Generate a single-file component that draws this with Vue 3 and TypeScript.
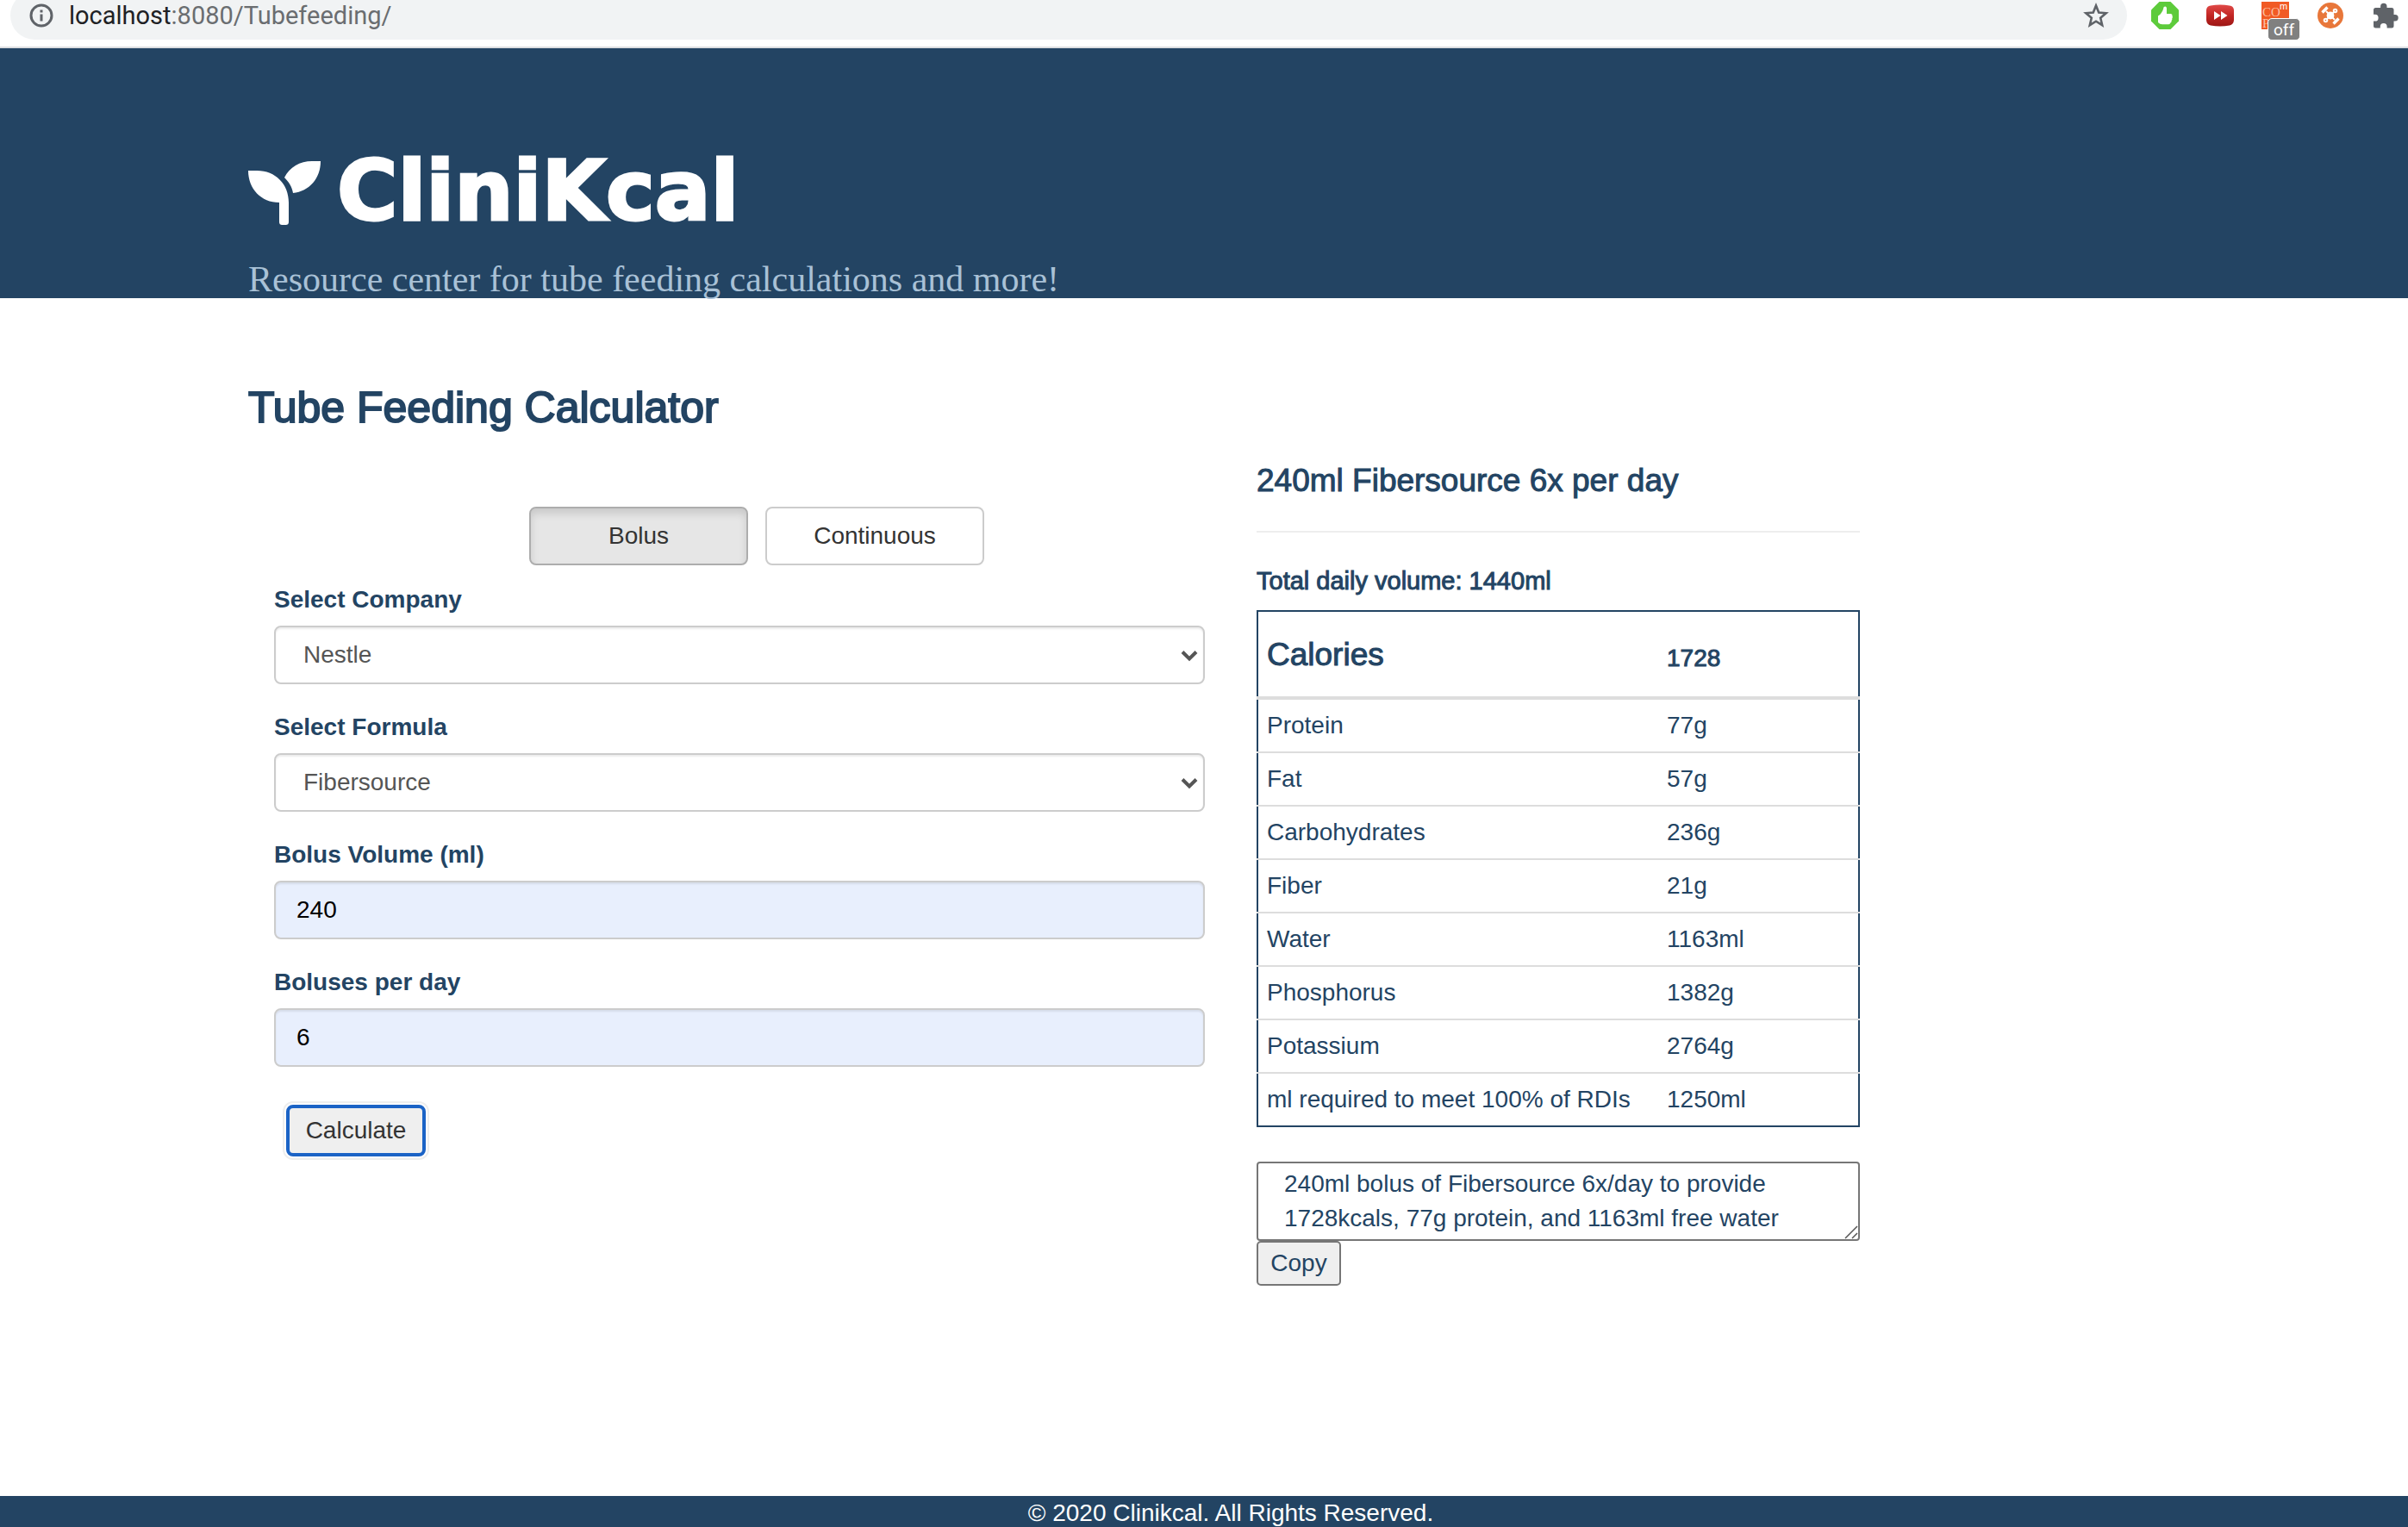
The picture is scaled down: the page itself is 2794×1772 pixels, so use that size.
<script setup lang="ts">
import { computed, ref } from 'vue'

type Mode = 'Bolus' | 'Continuous'

interface Nutrient {
  label: string
  value: string
}

const modes: Mode[] = ['Bolus', 'Continuous']
const mode = ref<Mode>('Bolus')
const company = ref('Nestle')
const formula = ref('Fibersource')
const volume = ref('240')
const boluses = ref('6')

const total = computed(() => Number(volume.value) * Number(boluses.value))

const nutrients: Nutrient[] = [
  { label: 'Protein', value: '77g' },
  { label: 'Fat', value: '57g' },
  { label: 'Carbohydrates', value: '236g' },
  { label: 'Fiber', value: '21g' },
  { label: 'Water', value: '1163ml' },
  { label: 'Phosphorus', value: '1382g' },
  { label: 'Potassium', value: '2764g' },
  { label: 'ml required to meet 100% of RDIs', value: '1250ml' },
]

const summary = ref(
  '240ml bolus of Fibersource 6x/day to provide 1728kcals, 77g protein, and 1163ml free water',
)
</script>

<template>
  <div class="page">
    <div class="browser">
      <div class="address">
        <svg class="info" viewBox="0 0 28 28" aria-hidden="true">
          <circle cx="14" cy="14" r="12" fill="none" stroke="#5f6368" stroke-width="3" />
          <path d="M12.500 7.500h3v3h-3zM12.500 12.500h3v8h-3z" fill="#5f6368" />
        </svg>
        <span class="url"><span class="host">localhost</span>:8080/Tubefeeding/</span>
        <button class="tool" type="button" aria-label="Bookmark this page">
          <svg viewBox="0 0 32 32">
            <path d="M16 4.500l3.200 8 8.500.700-6.500 5.600 2 8.400L16 22.700l-7.200 4.500 2-8.400-6.500-5.600 8.500-.700z" fill="none" stroke="#5f6368" stroke-width="2.600" />
          </svg>
        </button>
      </div>
      <div class="extensions">
        <button class="tool" type="button" aria-label="Thumbs up">
          <svg viewBox="0 0 32 32">
            <path d="M9.500 0h13L32 9.500v13L22.500 32h-13L0 22.500v-13z" fill="#5dcb3b" />
            <path d="M8 16.500q3-1.500 5.500-6.500l1.200-4q2.800-1.600 3.300 1.500V14h5q2 .500 1.500 2.500 1 1.500-.200 2.800.500 1.700-.700 2.600.300 2-1.300 2.600-.300 1.700-2 1.700H13q-3 0-5-2.200z" fill="#fff" />
          </svg>
        </button>
        <button class="tool" type="button" aria-label="Fast forward">
          <svg viewBox="0 0 32 32">
            <defs>
              <linearGradient id="red" x1="0" y1="0" x2="0" y2="1">
                <stop offset="0" stop-color="#e04a48" />
                <stop offset="0.500" stop-color="#c22624" />
                <stop offset="1" stop-color="#9c1614" />
              </linearGradient>
            </defs>
            <path d="M5 4.500q11-2 22 0 4.500.500 5 5v12q-.500 5-5 6-11 2-22 0-4.500-1-5-6v-12q.500-4.500 5-5z" fill="url(#red)" />
            <path d="M9 11l7.500 5L9 21zM17 11l7.500 5-7.500 5z" fill="#fff" />
          </svg>
        </button>
        <button class="tool" type="button" aria-label="Compare, off">
          <svg viewBox="0 0 32 32">
            <path d="M0 0h32v32H0z" fill="#f15a24" />
            <text x="1" y="17" font-size="15" fill="#fbc0a4">CO</text>
            <text x="1" y="30" font-size="15" fill="#fbc0a4">P</text>
            <text class="sup" x="21" y="9" font-size="11" fill="#fff">m</text>
          </svg>
          <span class="badge">off</span>
        </button>
        <button class="tool" type="button" aria-label="Drone">
          <svg viewBox="0 0 32 32">
            <circle cx="16" cy="16" r="15" fill="#e8773a" />
            <g fill="none" stroke="#fff" stroke-width="2">
              <path d="M11 11l10 10M21 11l-10 10" />
              <path d="M6.500 12.500l6-6M19.500 25.500l6-6" stroke-width="3.400" />
              <circle cx="21.500" cy="10.500" r="1.800" />
              <circle cx="10.500" cy="21.500" r="1.800" />
            </g>
            <circle cx="16" cy="16" r="4.400" fill="#fff" />
          </svg>
        </button>
        <button class="tool" type="button" aria-label="Extensions">
          <svg viewBox="0 0 32 32">
            <path d="M27 15h-1.500V9.500a2.500 2.500 0 0 0-2.500-2.500h-5.500V5.500a3.700 3.700 0 0 0-7.400 0V7H4.500A2.500 2.500 0 0 0 2 9.500v5.300h1.700a3.900 3.900 0 0 1 0 7.800H2v5.300a2.500 2.500 0 0 0 2.500 2.500h5.300v-1.600a3.900 3.900 0 0 1 7.800 0v1.600H23a2.500 2.500 0 0 0 2.500-2.500v-5.500H27a3.700 3.700 0 0 0 0-7.400z" fill="#5f6368" />
          </svg>
        </button>
      </div>
    </div>

    <header class="header">
      <a class="logo" href="/">
        <svg class="sprout" viewBox="0 0 84 76" aria-hidden="true">
          <g fill="#fff">
            <path d="M0 12h10c22 0 37 16 37 37v22c0 3-1 4-4 4h-3c-3 0-4-1-4-4V49C15 49 0 33 0 12z" />
            <path d="M84 1c0 20-13 35-32 37-1-7-5-13-10-18C48 8 60 1 74 1z" />
          </g>
        </svg>
        <span>CliniKcal</span>
      </a>
      <p class="tagline">Resource center for tube feeding calculations and more!</p>
    </header>

    <main class="main">
      <h1 class="title">Tube Feeding Calculator</h1>
      <div class="row">
        <form class="form" @submit.prevent>
          <div class="modes">
            <button
              v-for="m in modes"
              :key="m"
              type="button"
              class="mode"
              :class="{ active: m === mode }"
              @click="mode = m"
            >{{ m }}</button>
          </div>
          <div class="group">
            <label for="company">Select Company</label>
            <div class="select">
              <select id="company" v-model="company" class="control">
                <option>Nestle</option>
              </select>
              <svg class="chevron" viewBox="0 0 20 14" aria-hidden="true">
                <path d="M2 2.500l8 8 8-8" fill="none" stroke="#555" stroke-width="4" />
              </svg>
            </div>
          </div>
          <div class="group">
            <label for="formula">Select Formula</label>
            <div class="select">
              <select id="formula" v-model="formula" class="control">
                <option>Fibersource</option>
              </select>
              <svg class="chevron" viewBox="0 0 20 14" aria-hidden="true">
                <path d="M2 2.500l8 8 8-8" fill="none" stroke="#555" stroke-width="4" />
              </svg>
            </div>
          </div>
          <div class="group">
            <label for="volume">Bolus Volume (ml)</label>
            <input id="volume" v-model="volume" class="control filled" type="text" />
          </div>
          <div class="group">
            <label for="boluses">Boluses per day</label>
            <input id="boluses" v-model="boluses" class="control filled" type="text" />
          </div>
          <button class="calculate" type="submit">Calculate</button>
        </form>

        <section class="results">
          <h2 class="heading">{{ volume }}ml {{ formula }} {{ boluses }}x per day</h2>
          <hr />
          <h3 class="total">Total daily volume: {{ total }}ml</h3>
          <table>
            <thead>
              <tr>
                <th class="name">Calories</th>
                <th class="amount">1728</th>
              </tr>
            </thead>
            <tbody>
              <tr v-for="n in nutrients" :key="n.label">
                <td>{{ n.label }}</td>
                <td>{{ n.value }}</td>
              </tr>
            </tbody>
          </table>
          <div class="summary">
            <textarea v-model="summary" rows="2" aria-label="Summary"></textarea>
            <svg class="grip" viewBox="0 0 16 16" aria-hidden="true">
              <path d="M1 15L15 1M9 15l6-6" stroke="#555" stroke-width="1.500" />
            </svg>
          </div>
          <button class="copy" type="button">Copy</button>
        </section>
      </div>
    </main>

    <footer class="footer">© 2020 Clinikcal. All Rights Reserved.</footer>
  </div>
</template>

<style>
body {
  margin: 0;
  background: #fff;
}
</style>

<style scoped>
* {
  box-sizing: border-box;
}

.page {
  display: flex;
  flex-direction: column;
  min-height: 100vh;
  color: #234463;
  font-family: "Liberation Sans", Arial, sans-serif;
  font-size: 28px;
  line-height: 40px;
}

button,
input,
select,
textarea {
  margin: 0;
  font: inherit;
}

/* Browser bar */
.browser {
  display: flex;
  height: 56px;
  overflow: hidden;
  border-bottom: 2px solid #dcdee1;
  background: #fff;
}

.address {
  display: flex;
  flex: 1;
  align-items: center;
  height: 56px;
  margin: -10px 0 0 12px;
  padding: 0 20px 0 22px;
  border-radius: 28px;
  background: #f1f3f4;
}

.info {
  width: 28px;
  height: 28px;
}

.url {
  flex: 1;
  margin-left: 18px;
  color: #6a6d70;
  font-family: Roboto, sans-serif;
  font-size: 29px;
}

.host {
  color: #202124;
}

.extensions {
  display: flex;
  gap: 32px;
  padding: 2px 10px 0 28px;
}

.tool {
  position: relative;
  width: 32px;
  height: 32px;
  padding: 0;
  border: 0;
  background: none;
}

.tool svg {
  display: block;
  width: 32px;
  height: 32px;
  overflow: visible;
  font-family: "Liberation Serif", serif;
}

.tool .sup {
  font-family: "Liberation Sans", sans-serif;
}

.badge {
  position: absolute;
  top: 19px;
  left: 7px;
  width: 38px;
  height: 26px;
  border: 1px solid #fff;
  border-radius: 5px;
  background: #808080;
  color: #fff;
  font-family: Roboto, sans-serif;
  font-size: 19px;
  line-height: 26px;
  text-align: center;
}

/* Header */
.header {
  padding: 114px 226px 0 288px;
  background: #234463;
}

.logo {
  display: flex;
  align-items: flex-end;
  gap: 19px;
  height: 104px;
  color: #fff;
  font-family: "DejaVu Sans", sans-serif;
  font-size: 96px;
  font-weight: 700;
  line-height: 104px;
  text-decoration: none;
  -webkit-text-stroke: 3px #fff;
}

.sprout {
  width: 84px;
  height: 76px;
  margin-bottom: 12px;
}

.tagline {
  margin: 28px 0 0;
  color: #a9c1d6;
  font-family: "Liberation Serif", serif;
  font-size: 42px;
  line-height: 44px;
}

/* Calculator */
.main {
  padding: 100px 226px 60px 288px;
}

.title,
.heading,
.total,
th {
  font-weight: 400;
  -webkit-text-stroke: 1px currentColor;
}

.title {
  margin: 0;
  font-size: 50px;
  line-height: 54px;
  -webkit-text-stroke-width: 2px;
}

.row {
  display: grid;
  grid-template-columns: 6fr 4fr 2fr;
}

.form {
  padding: 88px 30px 0;
}

.modes {
  display: flex;
  justify-content: center;
  gap: 20px;
  margin-bottom: 20px;
  padding-left: 40px;
}

.mode {
  width: 254px;
  height: 68px;
  padding: 0;
  border: 2px solid #ccc;
  border-radius: 8px;
  background: #fff;
  color: #333;
}

.mode.active {
  border-color: #adadad;
  background: #e6e6e6;
  box-shadow: inset 0 6px 10px rgba(0, 0, 0, 0.125);
}

.group {
  margin-bottom: 30px;
}

.group label {
  display: block;
  margin-bottom: 10px;
  font-weight: 700;
}

.select {
  position: relative;
}

.control {
  display: block;
  width: 100%;
  height: 68px;
  padding: 0 24px;
  border: 2px solid #ccc;
  border-radius: 8px;
  outline: 0;
  background: #fff;
  box-shadow: inset 0 2px 2px rgba(0, 0, 0, 0.075);
  color: #555;
}

select.control {
  padding: 0 32px;
  appearance: none;
}

.control.filled {
  background: #e8effd;
  color: #000;
}

.chevron {
  position: absolute;
  top: 28px;
  right: 8px;
  width: 20px;
  height: 14px;
  pointer-events: none;
}

.calculate {
  width: 162px;
  height: 60px;
  margin: 14px 0 0 14px;
  padding: 0;
  border: 4px solid #1b63c6;
  border-radius: 8px;
  background: #efefef;
  box-shadow: 0 0 0 2px #fff, 0 0 0 4px #eee;
  color: #333;
}

.results {
  padding: 38px 30px 0;
}

.heading {
  margin: 0;
  font-size: 37px;
  line-height: 40px;
}

hr {
  margin: 38px 0 36px;
  border: 0;
  border-top: 2px solid #eee;
}

.total {
  margin: 0 0 14px;
  font-size: 29px;
}

table {
  width: 100%;
  border: 2px solid #234463;
  border-collapse: collapse;
  table-layout: fixed;
}

th,
td {
  padding: 10px;
  text-align: left;
}

td {
  border-top: 2px solid #ddd;
}

th {
  border-bottom: 4px solid #ddd;
  vertical-align: bottom;
}

th.name {
  width: 465px;
  padding: 30px 10px 28px;
  font-size: 37px;
}

th.amount {
  padding-bottom: 24px;
}

.summary {
  position: relative;
  margin-top: 40px;
}

textarea {
  display: block;
  width: 100%;
  height: 92px;
  padding: 4px 30px;
  overflow: hidden;
  border: 2px solid #767676;
  border-radius: 4px;
  outline: 0;
  background: #fff;
  color: inherit;
  resize: none;
}

.grip {
  position: absolute;
  right: 2px;
  bottom: 2px;
  width: 16px;
  height: 16px;
}

.copy {
  display: block;
  width: 98px;
  height: 52px;
  padding: 0;
  border: 2px solid #767676;
  border-radius: 5px;
  background: #efefef;
  color: inherit;
}

.footer {
  height: 36px;
  margin-top: auto;
  padding-left: 62px;
  overflow: hidden;
  background: #234463;
  color: #fff;
  text-align: center;
}
</style>
